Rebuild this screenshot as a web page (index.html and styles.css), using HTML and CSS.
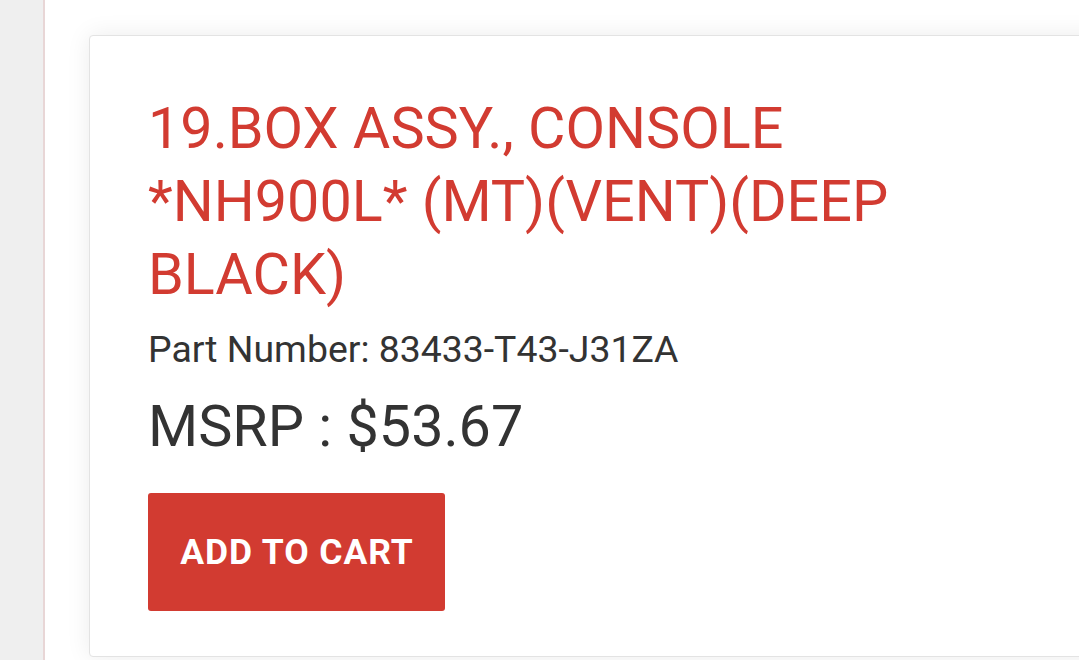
FILE: index.html
```html
<!DOCTYPE html>
<html>
<head>
<meta charset="utf-8">
<link rel="stylesheet" href="styles.css">
</head>
<body>
<div class="page">
  <aside class="side"></aside>
  <main class="main">
    <section class="card">
      <h1 class="title">19.BOX ASSY., CONSOLE *NH900L* (MT)(VENT)(DEEP BLACK)</h1>
      <p class="part">Part Number: 83433-T43-J31ZA</p>
      <p class="price">MSRP : $53.67</p>
      <button class="cart">ADD TO CART</button>
    </section>
  </main>
</div>
</body>
</html>
```
FILE: styles.css
```css
html, body {
  margin: 0;
  padding: 0;
  background: #ffffff;
  overflow: hidden;
}
body {
  font-family: Roboto, "Liberation Sans", sans-serif;
  width: 1079px;
  height: 660px;
}
.page {
  display: flex;
  height: 660px;
}
.side {
  flex: 0 0 43px;
  background: #efefef;
  border-right: 2px solid #e8d6d6;
}
.main {
  flex: 1;
  padding: 35px 0 0 44px;
  min-width: 0;
  overflow: hidden;
}
.card {
  width: 1100px;
  box-sizing: border-box;
  background: #fff;
  border: 1px solid #e3e3e3;
  border-radius: 4px;
  box-shadow: 0 0 24px rgba(0, 0, 0, 0.08);
  padding: 56px 60px 45px 58px;
}
.title {
  margin: 0;
  width: 790px;
  font-weight: 400;
  font-size: 57.5px;
  line-height: 73px;
  color: #d23b31;
}
.part {
  margin: 16px 0 0;
  font-size: 37.4px;
  line-height: 44px;
  color: #333;
}
.price {
  margin: 22px 0 0;
  font-size: 57.5px;
  line-height: 68px;
  color: #333;
}
.cart {
  margin-top: 32px;
  width: 297px;
  height: 118px;
  border: none;
  border-radius: 3px;
  background: #d23b31;
  color: #fff;
  font-family: Roboto, "Liberation Sans", sans-serif;
  font-weight: 700;
  font-size: 35.5px;
  letter-spacing: 0.9px;
  padding: 0 0 0 1px;
  display: block;
}
```
